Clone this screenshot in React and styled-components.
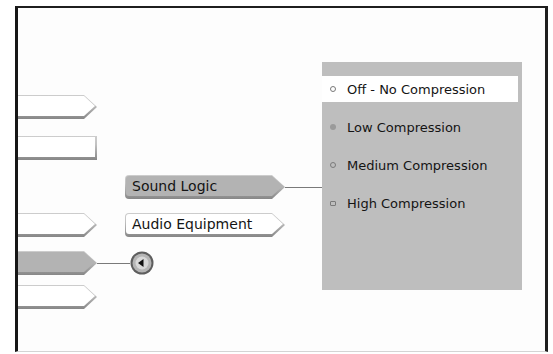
import React from "react";
import styled, { createGlobalStyle } from "styled-components";

const GlobalStyle = createGlobalStyle`
  html, body {
    margin: 0;
    padding: 0;
    background: #ffffff;
  }
  body {
    font-family: "DejaVu Sans", Verdana, sans-serif;
  }
`;

const arrowClip = (depth) =>
  `polygon(0 0, calc(100% - ${depth}px) 0, 100% 50%, calc(100% - ${depth}px) 100%, 0 100%)`;

const Frame = styled.div`
  box-sizing: border-box;
  margin: 6px 0 0 15px;
  width: 533px;
  height: 346px;
  border-left: 3px solid #161616;
  border-top: 2px solid #1e1e1e;
  border-right: 3px solid #1e1e1e;
  border-bottom: 1px solid #d4d4d4;
  background: #fdfdfd;
  overflow: hidden;
  display: flex;
  align-items: flex-start;
`;

const Tree = styled.div`
  width: 304px;
  flex-shrink: 0;
  display: flex;
  flex-direction: column;
`;

const Row = styled.div`
  display: flex;
  align-items: center;
  margin-top: ${(p) => p.$top}px;
`;

const Slot = styled.div`
  width: 79px;
  flex-shrink: 0;
  display: flex;
  justify-content: flex-end;
`;

const Spacer = styled.div`
  width: 28px;
  flex-shrink: 0;
`;

const TabShell = styled.div`
  box-sizing: border-box;
  flex-shrink: 0;
  width: ${(p) => p.$width}px;
  height: 24px;
  padding: 1px 2px 3px 1px;
  background: linear-gradient(#cdcdcd 0%, #c2c2c2 35%, #878787 100%);
  border-radius: ${(p) => (p.$rounded ? "4px 0 0 4px" : "0")};
  clip-path: ${(p) => (p.$arrow ? arrowClip(13) : "none")};
`;

const TabFace = styled.div`
  box-sizing: border-box;
  height: 100%;
  padding-left: 6px;
  display: flex;
  align-items: center;
  background: ${(p) => (p.$active ? "#b3b3b3" : "#ffffff")};
  border-radius: ${(p) => (p.$rounded ? "3px 0 0 3px" : "0")};
  clip-path: ${(p) => (p.$arrow ? arrowClip(11) : "none")};
  font-size: 14px;
  color: #141414;
  white-space: nowrap;
`;

const Connector = styled.div`
  height: 1px;
  background: #7a7a7a;
  width: ${(p) => (p.$width ? `${p.$width}px` : "auto")};
  flex: ${(p) => (p.$width ? "0 0 auto" : "1")};
`;

const Panel = styled.div`
  box-sizing: border-box;
  flex-shrink: 0;
  margin-top: 54px;
  width: 200px;
  height: 228px;
  padding-top: 14px;
  background: #bebebe;
  display: flex;
  flex-direction: column;
  gap: 12px;
`;

const Option = styled.div`
  height: 26px;
  margin-right: 4px;
  padding-left: 8px;
  display: flex;
  align-items: center;
  gap: 11px;
  background: ${(p) => (p.$active ? "#ffffff" : "transparent")};
  font-size: 13px;
  color: #141414;
  white-space: nowrap;
`;

const Bullet = styled.span`
  box-sizing: border-box;
  flex-shrink: 0;
  width: 6px;
  height: ${(p) => (p.$kind === "square" ? 5 : 6)}px;
  border-radius: ${(p) => (p.$kind === "square" ? "1px" : "50%")};
  border: ${(p) => (p.$kind === "dot" ? "none" : "1px solid #7a7a7a")};
  background: ${(p) => (p.$kind === "dot" ? "#9a9a9a" : "transparent")};
`;

function Tab({ width, arrow = true, active, rounded, children }) {
  return (
    <TabShell $width={width} $arrow={arrow} $rounded={rounded}>
      <TabFace $arrow={arrow} $active={active} $rounded={rounded}>
        {children}
      </TabFace>
    </TabShell>
  );
}

function BackButton() {
  return (
    <svg width="24" height="24" viewBox="0 0 24 24">
      <circle cx="12" cy="12" r="11.5" fill="#5e5e5e" />
      <circle cx="12" cy="12" r="9.5" fill="#b5b5b5" />
      <circle cx="12" cy="12" r="6.5" fill="#d8d8d8" />
      <polygon points="8,12 13.5,8 13.5,16" fill="#111" />
    </svg>
  );
}

const options = [
  { label: "Off - No Compression", kind: "ring", active: true },
  { label: "Low Compression", kind: "dot" },
  { label: "Medium Compression", kind: "ring" },
  { label: "High Compression", kind: "square" },
];

export default function App() {
  return (
    <>
      <GlobalStyle />
      <Frame>
        <Tree>
          <Row $top={87}>
            <Slot>
              <Tab width={110} />
            </Slot>
          </Row>
          <Row $top={17}>
            <Slot>
              <Tab width={110} arrow={false} />
            </Slot>
          </Row>
          <Row $top={15}>
            <Slot />
            <Spacer />
            <Tab width={160} active rounded>
              Sound Logic
            </Tab>
            <Connector />
          </Row>
          <Row $top={14}>
            <Slot>
              <Tab width={110} />
            </Slot>
            <Spacer />
            <Tab width={160} rounded>
              Audio Equipment
            </Tab>
          </Row>
          <Row $top={14}>
            <Slot>
              <Tab width={110} active />
            </Slot>
            <Connector $width={33} />
            <BackButton />
          </Row>
          <Row $top={10}>
            <Slot>
              <Tab width={110} />
            </Slot>
          </Row>
        </Tree>
        <Panel>
          {options.map((o) => (
            <Option key={o.label} $active={o.active}>
              <Bullet $kind={o.kind} />
              {o.label}
            </Option>
          ))}
        </Panel>
      </Frame>
    </>
  );
}
